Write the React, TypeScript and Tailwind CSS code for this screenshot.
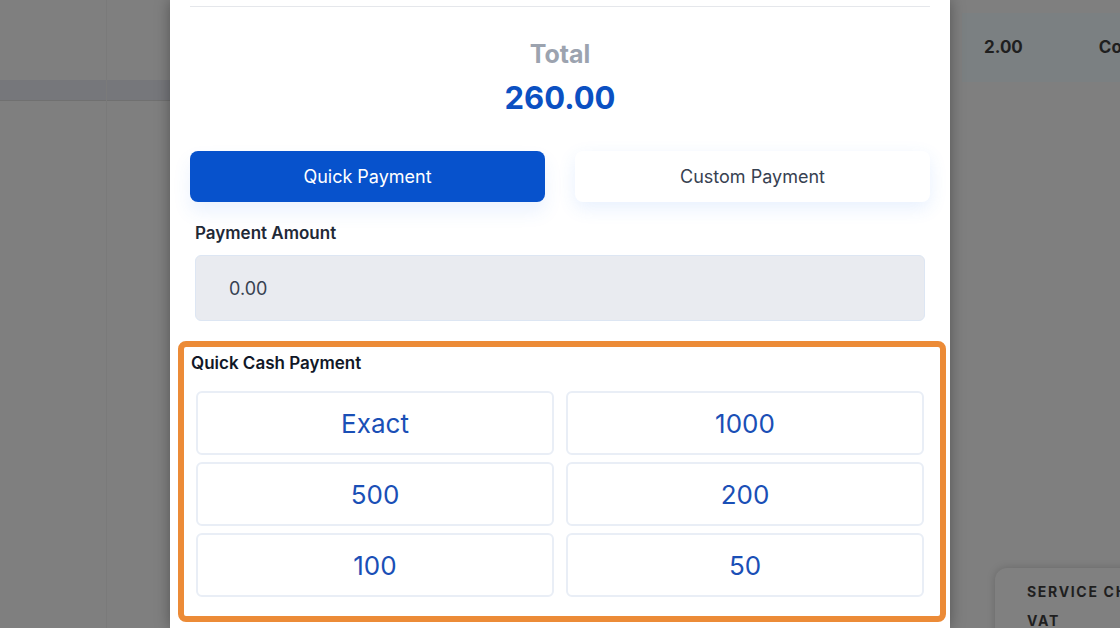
const quickAmounts = ["Exact", "1000", "500", "200", "100", "50"];

const PaymentModal = () => {
  return (
    <div className="absolute left-[170px] top-0 w-[780px] h-[628px] bg-white shadow-[0_0_14px_rgba(0,0,0,0.35)] px-5">
      <div className="border-t border-[#e5e7eb] mt-[6px]" />

      <div className="flex flex-col items-center pt-[29px]">
        <h2 className="text-[25px] leading-[36px] font-bold text-[#9ca3af]">Total</h2>
        <p className="text-[31px] leading-[44px] font-bold text-[#0b50c2] mt-[4px]">260.00</p>
      </div>

      <div className="grid grid-cols-2 gap-[30px] mt-[31px]">
        <button className="h-[51px] rounded-lg bg-[#0752cc] text-white text-[18px] shadow-[0_10px_18px_rgba(59,130,246,0.10)]">
          Quick Payment
        </button>
        <button className="h-[51px] rounded-lg bg-white text-[#374151] text-[18px] shadow-[0_6px_18px_rgba(59,130,246,0.12)]">
          Custom Payment
        </button>
      </div>

      <div className="mt-[19px] px-[5px]">
        <label className="block text-[17px] leading-[24px] font-semibold text-[#1f2937]">Payment Amount</label>
        <div className="mt-[10px] h-[66px] rounded-md bg-[#e9ebf0] border border-[#dde6f3] flex items-center pl-[33px] text-[18px] text-[#374151]">
          0.00
        </div>
      </div>

      <section className="mt-[20px] -ml-[12px] -mr-[16px] border-[6px] border-[#ec8b37] rounded-lg pt-[4px] pb-[19px] pl-[12px] pr-[16px]">
        <h3 className="-ml-[5px] text-[17px] leading-[24px] font-semibold text-[#111827]">Quick Cash Payment</h3>
        <div className="grid grid-cols-2 gap-x-[12px] gap-y-[7px] mt-[16px]">
          {quickAmounts.map((amt) => (
            <button
              key={amt}
              className="h-[64px] rounded-md border-2 border-[#e9eef6] bg-white text-[26px] text-[#1a4fb6]"
            >
              {amt}
            </button>
          ))}
        </div>
      </section>
    </div>
  );
};

export default function App() {
  return (
    <div
      className="relative w-[1120px] h-[628px] overflow-hidden bg-[#7f7f7f]"
      style={{ fontFamily: "Inter, 'Noto Sans', sans-serif" }}
    >
      {/* dimmed page behind the modal */}
      <div className="absolute left-0 top-0 w-[170px] h-full">
        <div className="absolute left-[106px] top-0 w-px h-full bg-[#7a7a7a]" />
        <div className="mt-[80px] h-[21px] bg-[#76777b] border-b border-[#707070]" />
      </div>

      <div className="absolute left-[962px] top-[13px] right-0 h-[69px] bg-[#7b8082] flex items-center pl-[22px] gap-[76px] text-[17px] font-bold text-[#1f1f1f] whitespace-nowrap">
        <span>2.00</span>
        <span>Co</span>
      </div>

      <div className="absolute left-[995px] top-[568px] right-[-20px] h-[80px] rounded-tl-xl bg-[#808080] shadow-[0_0_8px_rgba(0,0,0,0.18)] pl-[32px] pt-[9px] text-[14px] font-bold tracking-[0.12em] text-[#1f1f1f] leading-[29px] whitespace-nowrap">
        <div>SERVICE CHARGE</div>
        <div>VAT</div>
      </div>

      <PaymentModal />
    </div>
  );
}
